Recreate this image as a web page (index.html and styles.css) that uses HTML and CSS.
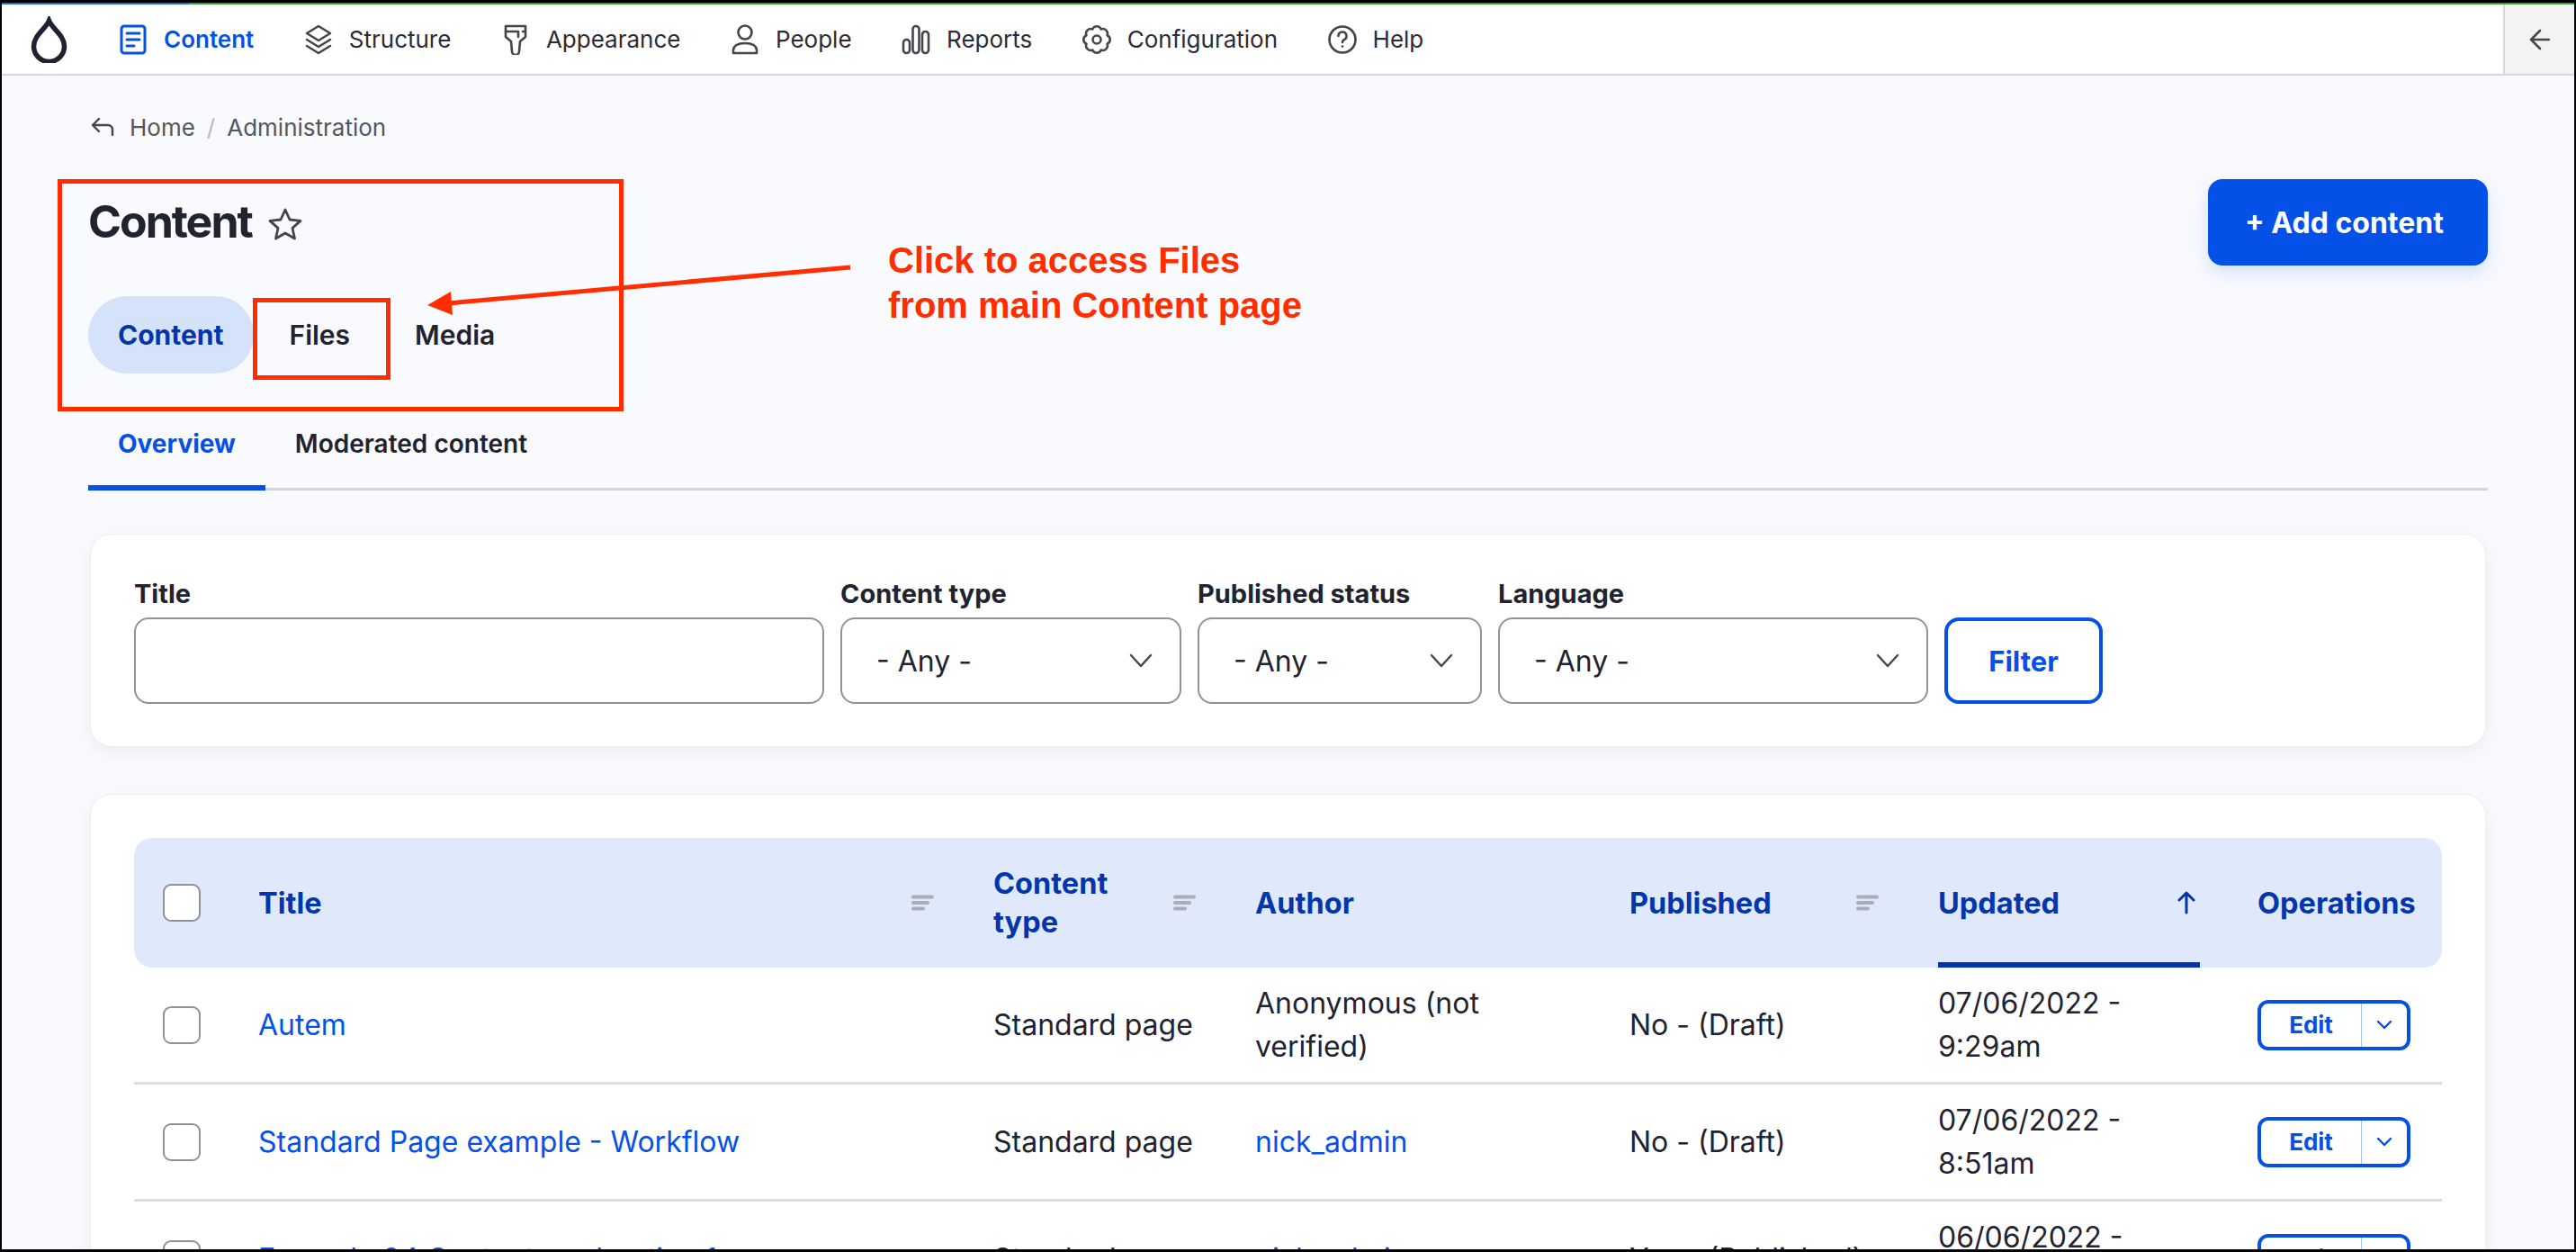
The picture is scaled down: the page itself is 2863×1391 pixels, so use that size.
FILE: index.html
```html
<!DOCTYPE html>
<html lang="en">
<head>
    <meta charset="UTF-8">
    <meta name="viewport" content="width=device-width, initial-scale=1.0">
    <title>Content</title>
    <link rel="stylesheet" href="styles.css">
</head>
<body>
<div class="window">
    <div class="topstrip"><div class="loader"></div></div>

    <div class="toolbar">
        <svg class="logo" width="41" height="52" viewBox="0 0 41 52" fill="none" stroke="#1f2233" stroke-width="5.5"><path d="M20.5 5C17 14 3.5 21 3.5 33.5a17 17 0 0 0 34 0C37.500 21 24 14 20.500 5Z"/></svg>
        <ul class="nav">
            <li class="nav-item active">
                <svg width="32" height="34" viewBox="0 0 32 34" fill="none" stroke="#0550e6" stroke-width="3" stroke-linecap="round"><rect x="3" y="2" width="26" height="30" rx="3"/><path d="M9 10h14M9 17h14M9 24h8"/></svg>
                <span>Content</span>
            </li>
            <li class="nav-item">
                <svg width="32" height="34" viewBox="0 0 32 34" fill="none" stroke="#45464d" stroke-width="2.600" stroke-linejoin="round" stroke-linecap="round"><path d="M16 2l13 8-13 8-13-8z"/><path d="M3 17l13 8 13-8"/><path d="M3 24l13 8 13-8"/></svg>
                <span>Structure</span>
            </li>
            <li class="nav-item">
                <svg width="32" height="34" viewBox="0 0 32 34" fill="none" stroke="#45464d" stroke-width="2.600" stroke-linejoin="round" stroke-linecap="round"><path d="M5 2h22v12l-6 5-1 11a4 4 0 0 1-8 0l-1-11-6-5z"/><path d="M5 8h14v6M27 8h-3"/></svg>
                <span>Appearance</span>
            </li>
            <li class="nav-item">
                <svg width="32" height="34" viewBox="0 0 32 34" fill="none" stroke="#45464d" stroke-width="2.600" stroke-linejoin="round"><circle cx="16" cy="9" r="7.500"/><path d="M3 32v-3c0-5 5-8 13-8s13 3 13 8v3z"/></svg>
                <span>People</span>
            </li>
            <li class="nav-item">
                <svg width="32" height="34" viewBox="0 0 32 34" fill="none" stroke="#45464d" stroke-width="2.600"><rect x="2" y="17" width="7" height="15" rx="3.500"/><rect x="12.500" y="2" width="7" height="30" rx="3.500"/><rect x="23" y="8" width="7" height="24" rx="3.500"/></svg>
                <span>Reports</span>
            </li>
            <li class="nav-item">
                <svg width="32" height="34" viewBox="0 0 32 32" fill="none" stroke="#45464d" stroke-width="2.600" stroke-linejoin="round"><path d="M20.780 4.450A5.200 5.200 0 0 1 27.550 11.220A5.200 5.200 0 0 1 27.550 20.780A5.200 5.200 0 0 1 20.780 27.550A5.200 5.200 0 0 1 11.220 27.550A5.200 5.200 0 0 1 4.450 20.780A5.200 5.200 0 0 1 4.450 11.220A5.200 5.200 0 0 1 11.220 4.450A5.200 5.200 0 0 1 20.780 4.450Z"/><circle cx="16" cy="16" r="4.500"/></svg>
                <span>Configuration</span>
            </li>
            <li class="nav-item">
                <svg width="32" height="34" viewBox="0 0 32 34" fill="none" stroke="#45464d" stroke-width="2.600" stroke-linecap="round"><circle cx="16" cy="17" r="14.500"/><path d="M11.500 13a4.500 4.500 0 1 1 6.500 4c-1.300.7-2 1.500-2 3"/><path d="M16 24.500v.1"/></svg>
                <span>Help</span>
            </li>
        </ul>
        <div class="collapse">
            <svg width="24" height="24" viewBox="0 0 24 24" fill="none" stroke="#45464d" stroke-width="2.600" stroke-linecap="round" stroke-linejoin="round"><path d="M12 2L2 12l10 10M2 12h20"/></svg>
        </div>
    </div>

    <div class="main">
        <div class="breadcrumb">
            <svg width="26" height="20" viewBox="0 0 26 20" fill="none" stroke="#45464d" stroke-width="2.400" stroke-linecap="round" stroke-linejoin="round"><path d="M9 1L2 8l7 7M2 8h17a5 5 0 0 1 5 5v6"/></svg>
            <span>Home</span>
            <span class="sep">/</span>
            <span>Administration</span>
        </div>

        <div class="pagehead">
            <div>
                <div class="title-row">
                    <h1>Content</h1>
                    <svg class="star" width="38" height="37" viewBox="0 0 38 37" fill="none" stroke="#45464d" stroke-width="2.800" stroke-linejoin="round"><path d="M19 3l5 11 12 1.400-9 8 2.500 11.600L19 29l-10.500 6L11 23.400l-9-8L14 14z"/></svg>
                </div>
                <div class="tabs">
                    <a class="tab current">Content</a>
                    <a class="tab">Files</a>
                    <a class="tab">Media</a>
                </div>
            </div>
            <a class="addbtn">+ Add content</a>
        </div>

        <div class="subtabs">
            <a class="subtab current">Overview</a>
            <a class="subtab">Moderated content</a>
        </div>

        <div class="card filters">
            <div class="field f-title">
                <label>Title</label>
                <div class="input"></div>
            </div>
            <div class="field f-type">
                <label>Content type</label>
                <div class="input select"><span>- Any -</span><svg class="chev" width="26" height="16" viewBox="0 0 26 16" fill="none" stroke="#45464d" stroke-width="2.400" stroke-linecap="round" stroke-linejoin="round"><path d="M2 2l11 12L24 2"/></svg></div>
            </div>
            <div class="field f-status">
                <label>Published status</label>
                <div class="input select"><span>- Any -</span><svg class="chev" width="26" height="16" viewBox="0 0 26 16" fill="none" stroke="#45464d" stroke-width="2.400" stroke-linecap="round" stroke-linejoin="round"><path d="M2 2l11 12L24 2"/></svg></div>
            </div>
            <div class="field f-lang">
                <label>Language</label>
                <div class="input select"><span>- Any -</span><svg class="chev" width="26" height="16" viewBox="0 0 26 16" fill="none" stroke="#45464d" stroke-width="2.400" stroke-linecap="round" stroke-linejoin="round"><path d="M2 2l11 12L24 2"/></svg></div>
            </div>
            <a class="filterbtn">Filter</a>
        </div>

        <div class="card listing">
            <table>
                <colgroup>
                    <col class="c-check"><col class="c-title"><col class="c-type"><col class="c-author"><col class="c-pub"><col class="c-upd"><col class="c-ops">
                </colgroup>
                <thead>
                    <tr>
                        <th class="cell-check"><div class="checkbox"></div></th>
                        <th><div class="th-in"><span>Title</span><svg class="sorticon" width="25" height="18" viewBox="0 0 25 18" stroke="#a9adb8" stroke-width="4" stroke-linecap="round"><path d="M2 2.500h21M2 9h16M2 15.500h11"/></svg></div></th>
                        <th><div class="th-in"><span>Content<br>type</span><svg class="sorticon" width="25" height="18" viewBox="0 0 25 18" stroke="#a9adb8" stroke-width="4" stroke-linecap="round"><path d="M2 2.500h21M2 9h16M2 15.500h11"/></svg></div></th>
                        <th><div class="th-in"><span>Author</span></div></th>
                        <th><div class="th-in"><span>Published</span><svg class="sorticon" width="25" height="18" viewBox="0 0 25 18" stroke="#a9adb8" stroke-width="4" stroke-linecap="round"><path d="M2 2.500h21M2 9h16M2 15.500h11"/></svg></div></th>
                        <th><div class="th-in sorted"><span>Updated</span><svg width="22" height="26" viewBox="0 0 22 26" fill="none" stroke="#0336ad" stroke-width="3" stroke-linecap="round" stroke-linejoin="round"><path d="M11 24V2M3 10l8-8 8 8"/></svg></div></th>
                        <th class="th-ops">Operations</th>
                    </tr>
                </thead>
                <tbody>
                    <tr>
                        <td class="cell-check"><div class="checkbox"></div></td>
                        <td><a>Autem</a></td>
                        <td>Standard page</td>
                        <td>Anonymous (not<br>verified)</td>
                        <td>No - (Draft)</td>
                        <td>07/06/2022 -<br>9:29am</td>
                        <td><div class="opsbtn"><span class="ops-edit">Edit</span><span class="ops-more"><svg width="18" height="11" viewBox="0 0 18 11" fill="none" stroke="#0550e6" stroke-width="2.400" stroke-linecap="round" stroke-linejoin="round"><path d="M2 2l7 7 7-7"/></svg></span></div></td>
                    </tr>
                    <tr>
                        <td class="cell-check"><div class="checkbox"></div></td>
                        <td><a>Standard Page example - Workflow</a></td>
                        <td>Standard page</td>
                        <td><a>nick_admin</a></td>
                        <td>No - (Draft)</td>
                        <td>07/06/2022 -<br>8:51am</td>
                        <td><div class="opsbtn"><span class="ops-edit">Edit</span><span class="ops-more"><svg width="18" height="11" viewBox="0 0 18 11" fill="none" stroke="#0550e6" stroke-width="2.400" stroke-linecap="round" stroke-linejoin="round"><path d="M2 2l7 7 7-7"/></svg></span></div></td>
                    </tr>
                    <tr>
                        <td class="cell-check"><div class="checkbox"></div></td>
                        <td><a>Example 04 Content moderation 1</a></td>
                        <td>Standard page</td>
                        <td><a>nick_admin</a></td>
                        <td>Yes - (Published)</td>
                        <td>06/06/2022 -<br>4:12pm</td>
                        <td><div class="opsbtn"><span class="ops-edit">Edit</span><span class="ops-more"><svg width="18" height="11" viewBox="0 0 18 11" fill="none" stroke="#0550e6" stroke-width="2.400" stroke-linecap="round" stroke-linejoin="round"><path d="M2 2l7 7 7-7"/></svg></span></div></td>
                    </tr>
                </tbody>
            </table>
        </div>
    </div>

    <!-- red annotation drawn over the screenshot -->
    <svg class="marks" width="2863" height="1391" viewBox="0 0 2863 1391" fill="none" stroke="#ff2d00">
        <rect x="66.500" y="201.500" width="624" height="253" stroke-width="5"/>
        <rect x="283.500" y="333.500" width="148" height="86" stroke-width="5"/>
        <path d="M945 297L498 337" stroke-width="5"/>
        <path d="M475 339L501 324L503 350Z" fill="#ff2d00" stroke="none"/>
    </svg>
    <div class="note">Click to access Files<br>from main Content page</div>
</div>
</body>
</html>
```

FILE: styles.css
```css
*{
    padding: 0;margin: 0;
    box-sizing: border-box;
}
body{
    font-family: "Inter","Liberation Sans",sans-serif;
    color: #222330;
    background: #000;
}
a{
    color: #0550e6;
    text-decoration: none;
}
.window{
    position: relative;
    width: 2863px;
    height: 1391px;
    overflow: hidden;
    border-style: solid;
    border-color: #000;
    border-width: 0 2px 3px 2px;
    background: #f9fafe;
}

.topstrip{
    height: 5px;
    border-top: 3px solid #000;
    background: #3d9b40;
}
.loader{
    width: 208px;
    height: 2px;
    background: #2a66e0;
}

.toolbar{
    display: flex;
    align-items: center;
    height: 79px;
    background: #fff;
    border-bottom: 2px solid #d8d9dd;
    padding-left: 32px;
}
.logo{
    margin-right: 57px;
}
.nav{
    display: flex;
    align-items: center;
    gap: 55.5px;
    list-style: none;
    flex: 1;
}
.nav-item{
    display: flex;
    align-items: center;
    gap: 18px;
    font-size: 26px;
    color: #2b2c36;
}
.nav-item.active{
    color: #0550e6;
    font-weight: 600;
}
.collapse{
    width: 79px;
    height: 100%;
    display: flex;
    align-items: center;
    justify-content: center;
    background: #f3f3f4;
    border-left: 2px solid #d8d9dd;
}

.main{
    padding: 0 96px;
}
.breadcrumb{
    display: flex;
    align-items: center;
    height: 30px;
    margin-top: 42px;
    padding-left: 3px;
    font-size: 26px;
    color: #55565b;
}
.breadcrumb svg{
    margin-right: 17px;
}
.sep{
    margin: 0 13px;
    color: #b9bac0;
}

.pagehead{
    display: flex;
    justify-content: space-between;
    margin-top: 43px;
}
.title-row{
    display: flex;
    align-items: center;
    gap: 18px;
    height: 70px;
    margin-top: 12px;
}
.star{
    margin-top: 4px;
}
h1{
    font-size: 50px;
    font-weight: 700;
    letter-spacing: -2px;
}
.tabs{
    display: flex;
    margin-top: 48px;
}
.tab{
    display: flex;
    align-items: center;
    height: 86px;
    padding: 0 36px;
    color: #222330;
    font-size: 30px;
    font-weight: 600;
    border-radius: 43px;
}
.tab.current{
    margin-right: 4px;
    padding: 0 33px;
    background: #d4e2fa;
    color: #0336ad;
    font-weight: 700;
}
.addbtn{
    display: flex;
    align-items: center;
    justify-content: center;
    width: 311px;
    height: 96px;
    padding-right: 8px;
    background: #0550e6;
    color: #fff;
    font-size: 32px;
    font-weight: 700;
    border-radius: 16px;
    box-shadow: 0 8px 20px rgba(5,80,230,0.15);
}

.subtabs{
    display: flex;
    height: 85px;
    margin-top: 45px;
    border-bottom: 3px solid #d5d7dc;
}
.subtab{
    display: flex;
    align-items: center;
    height: 85px;
    padding: 0 33px 19px;
    color: #222330;
    font-size: 28px;
    font-weight: 600;
}
.subtab.current{
    padding-bottom: 13px;
    color: #0550e6;
    border-bottom: 6px solid #0550e6;
    font-weight: 700;
}

.card{
    margin: 0 2px;
    background: #fff;
    border: 1px solid #eeeff3;
    border-radius: 24px;
    box-shadow: 0 6px 18px rgba(30,40,80,0.06);
}
.filters{
    display: flex;
    align-items: flex-end;
    gap: 18px;
    height: 237px;
    margin-top: 48px;
    padding: 0 48px 47px;
}
.field label{
    display: block;
    height: 40px;
    font-size: 29px;
    font-weight: 700;
    line-height: 40px;
    margin-bottom: 6px;
}
.f-title{ width: 767px; }
.f-type{ width: 379px; }
.f-status{ width: 316px; }
.f-lang{ width: 478px; }
.input{
    height: 96px;
    background: #fff;
    border: 2px solid #919297;
    border-radius: 16px;
}
.select{
    display: flex;
    align-items: center;
    justify-content: space-between;
    padding: 0 30px 0 38px;
    font-size: 32px;
}
.filterbtn{
    display: flex;
    align-items: center;
    justify-content: center;
    width: 176px;
    height: 96px;
    border: 4px solid #0550e6;
    border-radius: 16px;
    font-size: 31px;
    font-weight: 700;
}

.listing{
    margin-top: 52px;
    padding: 48px;
}
table{
    width: 2565px;
    table-layout: fixed;
    border-collapse: separate;
    border-spacing: 0;
}
.c-check{ width: 138px; }
.c-title{ width: 817px; }
.c-type{ width: 291px; }
.c-author{ width: 416px; }
.c-pub{ width: 343px; }
.c-upd{ width: 355px; }
.c-ops{ width: 205px; }
th{
    height: 144px;
    background: #e0e9fb;
    color: #0336ad;
    font-size: 32.5px;
    font-weight: 700;
    line-height: 43px;
    text-align: left;
}
th:first-child{
    border-radius: 20px 0 0 20px;
}
th:last-child{
    border-radius: 0 20px 20px 0;
}
.th-in{
    display: flex;
    align-items: center;
    justify-content: space-between;
    height: 144px;
    margin-right: 66px;
}
.th-in.sorted{
    margin-right: 64px;
    padding: 6px 4px 0 0;
    border-bottom: 6px solid #0336ad;
}
td{
    height: 130px;
    border-bottom: 3px solid #dcdde0;
    font-size: 32px;
    line-height: 48px;
}
.cell-check{
    padding-left: 32px;
}
.checkbox{
    width: 42px;
    height: 42px;
    background: #fff;
    border: 2px solid #919297;
    border-radius: 9px;
}
.opsbtn{
    display: flex;
    width: 170px;
    height: 56px;
    border: 4px solid #0550e6;
    border-radius: 12px;
}
.ops-edit{
    display: flex;
    align-items: center;
    justify-content: center;
    width: 112px;
    color: #0550e6;
    font-size: 26px;
    font-weight: 700;
    border-right: 1px solid #a9c2f5;
}
.ops-more{
    display: flex;
    align-items: center;
    justify-content: center;
    flex: 1;
}

/* annotation layer */
.marks{
    position: absolute;
    top: 0;
    left: -2px;
    pointer-events: none;
}
.note{
    position: absolute;
    top: 264px;
    left: 985px;
    color: #ff2d00;
    font-family: "Liberation Sans",sans-serif;
    font-size: 40px;
    font-weight: 700;
    line-height: 50px;
}
```
